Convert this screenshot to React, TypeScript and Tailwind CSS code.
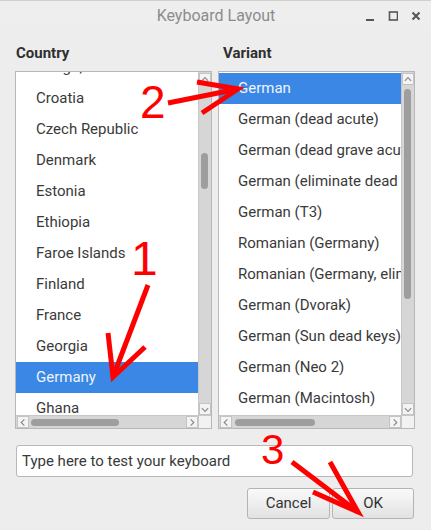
import React from 'react'

const countries = [
  'Congo, The Democratic Republic',
  'Croatia',
  'Czech Republic',
  'Denmark',
  'Estonia',
  'Ethiopia',
  'Faroe Islands',
  'Finland',
  'France',
  'Georgia',
  'Germany',
  'Ghana',
  'Greece',
]

const variants = [
  'German',
  'German (dead acute)',
  'German (dead grave acute)',
  'German (eliminate dead keys)',
  'German (T3)',
  'Romanian (Germany)',
  'Romanian (Germany, eliminate dead keys)',
  'German (Dvorak)',
  'German (Sun dead keys)',
  'German (Neo 2)',
  'German (Macintosh)',
  'German (Macintosh, eliminate dead keys)',
]

function Chevron({ dir }: { dir: 'up' | 'down' | 'left' | 'right' }) {
  const paths = {
    up: 'M2 7 L5.5 3.5 L9 7',
    down: 'M2 4 L5.5 7.5 L9 4',
    left: 'M7 2 L3.5 5.5 L7 9',
    right: 'M4 2 L7.5 5.5 L4 9',
  }
  return (
    <svg width="11" height="11" viewBox="0 0 11 11">
      <path d={paths[dir]} fill="none" stroke="#8a8a8a" strokeWidth="1.3" />
    </svg>
  )
}

function ArrowButton({ dir }: { dir: 'up' | 'down' | 'left' | 'right' }) {
  return (
    <div className="w-[12px] h-[12px] shrink-0 flex items-center justify-center bg-[#f4f4f4] border border-[#c4c4c4]">
      <Chevron dir={dir} />
    </div>
  )
}

interface ListBoxProps {
  items: string[]
  selected: string
  offset: string
  pad: string
  vThumb: { top: number; height: number }
  hThumb: { left: number; width: number }
}

function ListBox({ items, selected, offset, pad, vThumb, hThumb }: ListBoxProps) {
  return (
    <div className="w-[197px] h-[358px] border border-[#b8b8b8] bg-white flex flex-col">
      <div className="flex flex-1 min-h-0">
        <div className="flex-1 overflow-hidden">
          <div className={offset}>
            {items.map((item) => (
              <div
                key={item}
                className={`h-[31px] flex items-center whitespace-nowrap text-[15px] ${pad} ${
                  item === selected ? 'bg-[#3a87e5] text-[#eef4fc]' : 'text-[#3a3a3a]'
                }`}
              >
                {item}
              </div>
            ))}
          </div>
        </div>
        {/* vertical scrollbar */}
        <div className="w-[13px] bg-[#d6d6d6] border-l border-[#c8c8c8] flex flex-col items-center pt-[1px]">
          <ArrowButton dir="up" />
          <div className="flex-1 w-full relative">
            <div
              className="absolute left-[2px] w-[7px] rounded-full bg-[#9e9e9e]"
              style={{ top: vThumb.top, height: vThumb.height }}
            />
          </div>
          <ArrowButton dir="down" />
        </div>
      </div>
      {/* horizontal scrollbar */}
      <div className="h-[13px] flex border-t border-[#c8c8c8]">
        <div className="flex-1 bg-[#d6d6d6] flex items-center pl-[1px]">
          <ArrowButton dir="left" />
          <div className="flex-1 h-full relative">
            <div
              className="absolute top-[3px] h-[7px] rounded-full bg-[#9e9e9e]"
              style={{ left: hThumb.left, width: hThumb.width }}
            />
          </div>
          <ArrowButton dir="right" />
        </div>
        <div className="w-[13px] bg-[#f2f2f2] border-l border-[#c8c8c8]" />
      </div>
    </div>
  )
}

export default function App() {
  return (
    <div
      className="w-[431px] h-[530px] bg-[#ededed] relative overflow-hidden flex flex-col"
      style={{ fontFamily: 'Roboto, "Liberation Sans", sans-serif' }}
    >
      {/* Title bar */}
      <div className="h-[30px] shrink-0 flex items-center relative border-t border-[#d0d0d0] bg-[#eeeeee]">
        <div className="flex-1 text-center text-[16px] text-[#8c8c8c] pl-[1px]">Keyboard Layout</div>
        <div className="absolute right-[10px] top-[9px] flex items-center gap-[13px]">
          <svg width="10" height="12" viewBox="0 0 10 12">
            <rect x="1" y="9" width="8" height="2" fill="#555" />
          </svg>
          <svg width="10" height="12" viewBox="0 0 10 12">
            <rect x="1.5" y="2" width="8" height="8" fill="none" stroke="#555" strokeWidth="1.6" />
          </svg>
          <svg width="10" height="12" viewBox="0 0 10 12">
            <path d="M1.5 2.5 L8.5 9.5 M8.5 2.5 L1.5 9.5" stroke="#555" strokeWidth="2" />
          </svg>
        </div>
      </div>

      {/* Content */}
      <div className="flex flex-col px-[15px] pt-[12px]">
        <div className="flex gap-[10px] text-[15px] font-bold text-[#2f2f2f] h-[29px] pl-[1px]">
          <div className="w-[197px]">Country</div>
          <div className="flex-1">Variant</div>
        </div>
        <div className="flex gap-[6px]">
          <ListBox
            items={countries}
            selected="Germany"
            offset="-mt-[20px]"
            pad="pl-[20px]"
            vThumb={{ top: 68, height: 36 }}
            hThumb={{ left: 2, width: 88 }}
          />
          <ListBox
            items={variants}
            selected="German"
            offset="mt-[1px]"
            pad="pl-[19px]"
            vThumb={{ top: 4, height: 210 }}
            hThumb={{ left: 3, width: 80 }}
          />
        </div>

        <div className="mt-[16px] ml-[1px] w-[397px] h-[32px] bg-white border border-[#b8b8b8] rounded-[3px] flex items-center pl-[5px] text-[15px] text-[#3a3a3a]">
          Type here to test your keyboard
        </div>

        <div className="mt-[11px] flex justify-end gap-[2px] pr-[2px]">
          <button className="w-[83px] h-[31px] rounded-[3px] border border-[#b4b4b4] bg-gradient-to-b from-[#fafafa] to-[#e2e2e2] text-[15px] text-[#333]">
            Cancel
          </button>
          <button className="w-[82px] h-[31px] rounded-[3px] border border-[#b4b4b4] bg-gradient-to-b from-[#fafafa] to-[#e2e2e2] text-[15px] text-[#333]">
            OK
          </button>
        </div>
      </div>

      {/* Red annotations */}
      <svg className="absolute inset-0 pointer-events-none" width="431" height="530" viewBox="0 0 431 530">
        <g stroke="#ff0000" strokeWidth="5" fill="none" strokeLinecap="butt" strokeLinejoin="miter">
          <path d="M148 285 L113 377" />
          <path d="M108 333 L113 377 L145 347" />
          <path d="M168 103 L238 89" />
          <path d="M197 82 L238 89 L202 113" />
          <path d="M292 462 L358 512" />
          <path d="M330 462 L358 512 L313 492" />
        </g>
      </svg>
      <span
        className="absolute left-[131px] top-[235px] text-[48px] leading-none text-[#ff0000]"
        style={{ fontFamily: '"Liberation Sans", sans-serif' }}
      >
        1
      </span>
      <span
        className="absolute left-[140px] top-[79px] text-[46px] leading-none text-[#ff0000]"
        style={{ fontFamily: '"Liberation Sans", sans-serif' }}
      >
        2
      </span>
      <span
        className="absolute left-[261px] top-[429px] text-[42px] leading-none text-[#ff0000]"
        style={{ fontFamily: '"Liberation Sans", sans-serif' }}
      >
        3
      </span>
    </div>
  )
}
